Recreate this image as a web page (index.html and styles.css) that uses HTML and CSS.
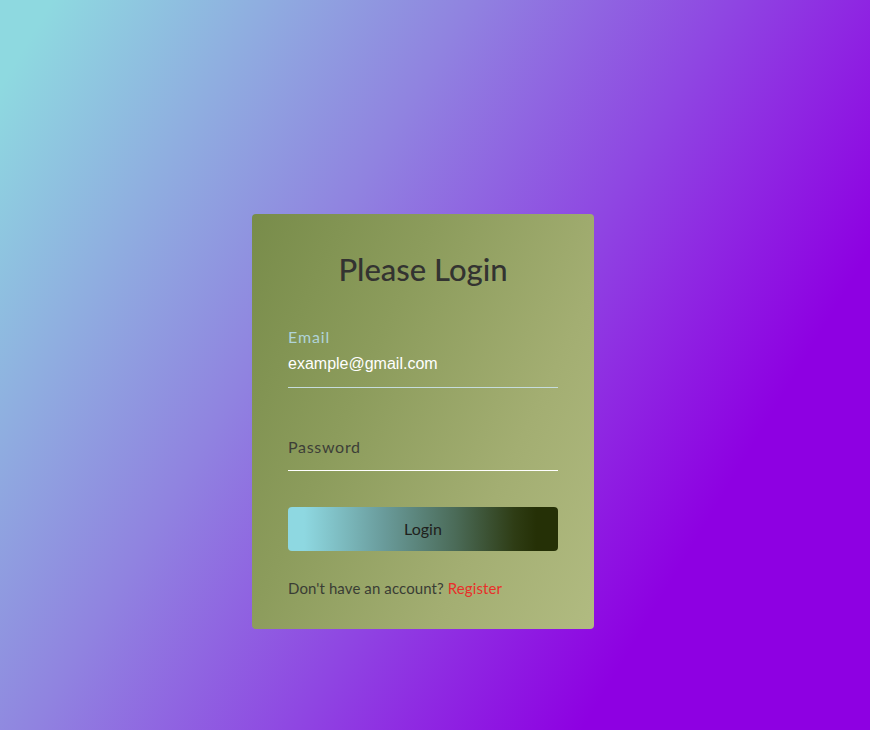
FILE: index.html
```html
<!DOCTYPE html>
<html lang="en">
<head>
<meta charset="utf-8">
<title>Login</title>
<link rel="stylesheet" href="styles.css">
</head>
<body>
<main class="page">
  <form class="card">
    <h1 class="title">Please Login</h1>
    <div class="field">
      <label class="label label-active" for="email">Email</label>
      <input class="input input-email" id="email" type="text" value="example@gmail.com">
    </div>
    <div class="field field-password">
      <input class="input input-password" id="password" type="password" placeholder="Password">
    </div>
    <button class="btn" type="button">Login</button>
    <p class="footer">Don't have an account? <a class="link" href="#">Register</a></p>
  </form>
</main>
</body>
</html>
```
FILE: styles.css
```css
html, body {
  margin: 0;
  padding: 0;
  height: 100%;
}
body {
  background: linear-gradient(121deg, #8ed9e0 4%, #9083e0 36%, #8f46e2 56%, #8e00e2 78%);
  font-family: "Lato", "Noto Sans", sans-serif;
}
.page {
  min-height: 730px;
  box-sizing: border-box;
  padding-top: 214px;
  padding-right: 24px;
  display: flex;
  justify-content: center;
  align-items: flex-start;
}
.card {
  width: 342px;
  box-sizing: border-box;
  padding: 38px 36px 31px;
  border-radius: 4px;
  background: linear-gradient(115deg, #788c4a 0%, #8c9c5c 35%, #a3ae72 70%, #b1bb81 100%);
  display: flex;
  flex-direction: column;
}
.title {
  margin: 0;
  text-align: center;
  font-size: 31px;
  line-height: 34px;
  font-weight: 500;
  color: #333331;
}
.field {
  margin-top: 41px;
  display: flex;
  flex-direction: column;
}
.label {
  font-size: 16px;
  line-height: 20px;
  margin-bottom: 3px;
  letter-spacing: 0.9px;
  font-weight: 400;
}
.label-active {
  color: #b0d3d8;
}
.input {
  display: block;
  width: 100%;
  box-sizing: border-box;
  background: transparent;
  border: none;
  outline: none;
  margin: 0;
}
.input-email {
  padding: 5px 0 14px;
  line-height: 18px;
  height: 38px;
  font-family: "Liberation Sans", Arial, sans-serif;
  font-size: 16px;
  color: #ffffff;
  border-bottom: 1px solid #c6dcdc;
}
.field-password {
  margin-top: 43px;
}
.input-password {
  padding: 5px 0 14px;
  line-height: 20px;
  height: 40px;
  font-family: "Lato", "Noto Sans", sans-serif;
  font-size: 16px;
  color: #3a3a36;
  border-bottom: 1px solid #ffffff;
  letter-spacing: 0.7px;
}
.input-password::placeholder {
  color: #3d3f38;
  opacity: 1;
}
.btn {
  margin-top: 36px;
  height: 44px;
  padding: 0 0 2px;
  border: none;
  border-radius: 4px;
  background: linear-gradient(to right, #8ed8e1 6%, #6a9c9c 35%, #4b6b58 62%, #2e3c14 84%, #253006 92%);
  font-family: "Lato", "Noto Sans", sans-serif;
  font-size: 16px;
  color: #1f211c;
  cursor: pointer;
}
.footer {
  margin: 27px 0 0;
  font-size: 15px;
  line-height: 20px;
  letter-spacing: 0.1px;
  color: #3a3d35;
}
.link {
  color: #e8302a;
  text-decoration: none;
}
```
